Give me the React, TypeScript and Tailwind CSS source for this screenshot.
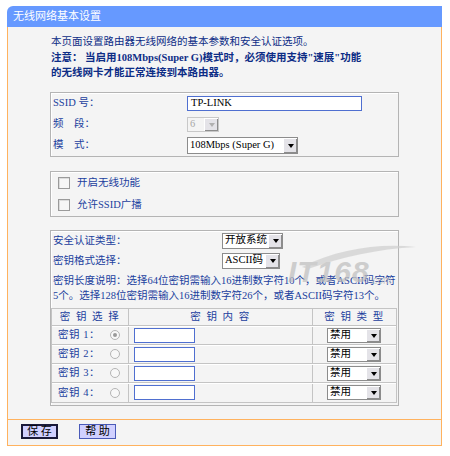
import React from 'react';

// Classic router admin page: 无线网络基本设置

const FONT = "font-['Liberation_Serif','Noto_Sans_CJK_SC',serif]";

function Arrow({ disabled = false }: { disabled?: boolean }) {
    return (
        <div className="w-[14px] shrink-0 bg-[#e4e3e8] border-l border-t border-[#ffffff] shadow-[inset_-1px_-1px_0_#8c8c8c] flex items-center justify-center">
            <div
                className={`w-0 h-0 border-x-[3.5px] border-t-[4px] border-x-transparent ${disabled ? 'border-t-[#b0b0b0]' : 'border-t-black'}`}
            />
        </div>
    );
}

function Select({ text, className, disabled = false }: { text: string; className: string; disabled?: boolean }) {
    return (
        <div
            className={`flex items-stretch border ${disabled ? 'border-[#c8c8c8] bg-[#f4f4f4] text-[#a8a8a8]' : 'border-[#8c8c8c] bg-white text-black'} ${className}`}
        >
            <div className="flex-1 pl-[2px] flex items-center leading-none whitespace-nowrap overflow-hidden">{text}</div>
            <Arrow disabled={disabled} />
        </div>
    );
}

function Checkbox() {
    return <div className="w-[12px] h-[12px] border border-[#9a9a9a] bg-[#f6f6f6] shadow-[inset_1px_1px_0_#dcdcdc]" />;
}

function Radio({ checked = false }: { checked?: boolean }) {
    return (
        <div className="w-[10px] h-[10px] rounded-full border border-[#b4b4b4] bg-[#f8f8f8] flex items-center justify-center">
            {checked && <div className="w-[4px] h-[4px] rounded-full bg-[#9a9a9a]" />}
        </div>
    );
}

const Box: React.FC<{ className?: string; children: React.ReactNode }> = ({ className = '', children }) => (
    <div className={`w-[349px] border border-[#b4b4b4] shadow-[inset_1px_1px_0_#ffffff] ${className}`}>{children}</div>
);

export default function App() {
    const keys = [1, 2, 3, 4];

    return (
        <div className={`w-[450px] h-[456px] bg-white pt-[6px] pl-[7px] text-[10.5px] ${FONT}`}>
            <div className="w-[435px]">
                {/* Title bar */}
                <div className="h-[21px] bg-[#6699ff] rounded-tl-[6px] pl-[6px] flex items-center text-white text-[11px]">
                    无线网络基本设置
                </div>

                {/* Body */}
                <div className="relative h-[393px] overflow-hidden bg-[#f4f4f4] border-x border-b border-[#ffb25e] pl-[42px] pt-[7px]">
                    <div className="pl-[1px] leading-[15.5px] text-[#0d2d86] whitespace-nowrap">
                        <div>本页面设置路由器无线网络的基本参数和安全认证选项。</div>
                        <div className="font-bold">注意： 当启用108Mbps(Super G)模式时，必须使用支持"速展"功能</div>
                        <div className="font-bold">的无线网卡才能正常连接到本路由器。</div>
                    </div>

                    {/* SSID / channel / mode */}
                    <Box className="mt-[11px] pl-[2px] text-[#1b3f9e]">
                        <div className="h-[21px] flex items-center">
                            <div className="w-[134px] whitespace-pre">SSID 号：</div>
                            <div className="w-[175px] h-[15px] border border-[#4f6fd0] bg-white text-black pl-[3px] flex items-center leading-none">
                                TP-LINK
                            </div>
                        </div>
                        <div className="h-[21px] flex items-center">
                            <div className="w-[134px]">频　段：</div>
                            <Select text="6" className="w-[32px] h-[15px]" disabled />
                        </div>
                        <div className="h-[21px] flex items-center">
                            <div className="w-[134px]">模　式：</div>
                            <Select text="108Mbps (Super G)" className="w-[111px] h-[17px]" />
                        </div>
                    </Box>

                    {/* Switches */}
                    <Box className="mt-[14px] text-[#1b3f9e]">
                        <div className="h-[22px] flex items-center pl-[7px]">
                            <Checkbox />
                            <span className="ml-[7px]">开启无线功能</span>
                        </div>
                        <div className="h-[22px] flex items-center pl-[7px]">
                            <Checkbox />
                            <span className="ml-[7px]">允许SSID广播</span>
                        </div>
                    </Box>

                    {/* Security */}
                    <Box className="mt-[13px] pb-[2px] text-[#1b3f9e]">
                        <div className="pl-[2px]">
                            <div className="h-[20px] flex items-center">
                                <div className="w-[169px]">安全认证类型：</div>
                                <Select text="开放系统" className="w-[61px] h-[16px]" />
                            </div>
                            <div className="h-[20px] flex items-center">
                                <div className="w-[169px]">密钥格式选择：</div>
                                <Select text="ASCII码" className="w-[58px] h-[16px]" />
                            </div>
                            <div className="mt-[2px] leading-[15.5px] whitespace-nowrap">
                                <div>密钥长度说明：选择64位密钥需输入16进制数字符10个，或者ASCII码字符</div>
                                <div>5个。选择128位密钥需输入16进制数字符26个，或者ASCII码字符13个。</div>
                            </div>
                        </div>

                        <div className="mt-[4px] w-[346px] border border-[#c4c4c4]">
                            <div className="h-[17px] flex border-b border-[#c4c4c4] tracking-[1.5px]">
                                <div className="w-[77px] border-r border-[#c4c4c4] flex items-center justify-center">密 钥 选 择</div>
                                <div className="w-[184px] border-r border-[#c4c4c4] flex items-center justify-center">密 钥 内 容</div>
                                <div className="flex-1 flex items-center justify-center">密 钥 类 型</div>
                            </div>
                            {keys.map((k) => (
                                <div key={k} className="h-[19px] flex border-t border-[#ffffff] border-b border-b-[#c4c4c4] last:border-b-0">
                                    <div className="w-[77px] border-r border-[#c4c4c4] flex items-center pl-[6px]">
                                        <span className="w-[52px] whitespace-pre tracking-[0.5px]">密钥 {k}：</span>
                                        <Radio checked={k === 1} />
                                    </div>
                                    <div className="w-[184px] border-r border-[#c4c4c4] flex items-center pl-[5px]">
                                        <div className="w-[61px] h-[15px] border border-[#4f6fd0] bg-white" />
                                    </div>
                                    <div className="flex-1 flex items-center pl-[14px]">
                                        <Select text="禁用" className="w-[54px] h-[15px]" />
                                    </div>
                                </div>
                            ))}
                        </div>
                    </Box>

                    {/* IT168 watermark */}
                    <div className="absolute left-[280px] top-[214px] pointer-events-none select-none opacity-70">
                        <svg width="120" height="30" viewBox="0 0 120 30" className="absolute left-[10px] top-[0px]">
                            <path d="M4 26 C40 8 80 2 118 6 C80 8 44 16 10 28 Z" fill="#cfcfcf" />
                        </svg>
                        <div className="relative pt-[16px] flex items-end">
                            <span className="font-['Liberation_Sans',sans-serif] italic font-bold text-[30px] leading-none text-[#bdbdbd] tracking-[1px]">
                                IT168
                            </span>
                            <span className="font-['Liberation_Sans',sans-serif] text-[10px] text-[#bdbdbd] leading-none mb-[1px]">.com</span>
                        </div>
                    </div>
                </div>

                {/* Buttons */}
                <div className="h-[26px] bg-[#f4f4f4] border-x border-b border-[#ffb25e] pt-[4px] pl-[13px] flex gap-[21px] items-start">
                    <button className="w-[37px] h-[15px] bg-[#d0d0ff] border-2 border-[#1a1a3a] text-black text-[11px] leading-none flex items-center justify-center whitespace-pre">
                        保 存
                    </button>
                    <button className="w-[37px] h-[15px] bg-[#d0d0ff] border border-[#4a5ab8] text-black text-[11px] leading-none flex items-center justify-center whitespace-pre">
                        帮 助
                    </button>
                </div>
            </div>
        </div>
    );
}
